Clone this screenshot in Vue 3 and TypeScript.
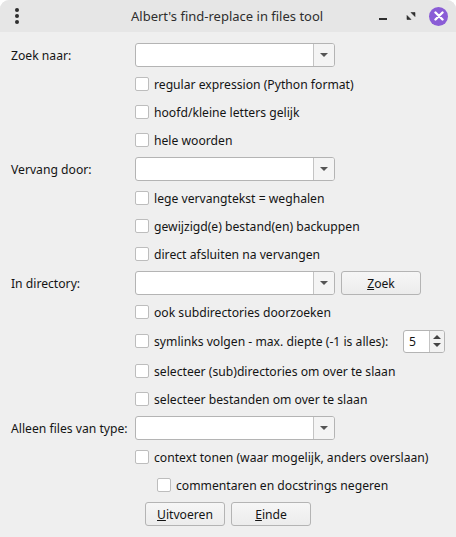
<template>
  <div class="window">
    <header class="titlebar">
      <div class="menu-dots"><span></span><span></span><span></span></div>
      <div class="title">Albert's find-replace in files tool</div>
      <div class="win-btns">
        <svg class="min" width="10" height="10" viewBox="0 0 10 10"><rect x="1" y="7" width="8" height="2" fill="#2e2e2e" /></svg>
        <svg class="max" width="10" height="10" viewBox="0 0 10 10"><path d="M5 1.5h4v4zM1 4.5l4 4H1z" fill="#2e2e2e" stroke="#2e2e2e" stroke-width=".6" /></svg>
        <div class="close">
          <svg width="10" height="10" viewBox="0 0 10 10"><path d="M1.5 1.5l7 7M8.5 1.5l-7 7" stroke="#fff" stroke-width="2.4" stroke-linecap="round" /></svg>
        </div>
      </div>
    </header>

    <main class="form">
      <template v-for="row in rows" :key="row.text">
        <div v-if="row.kind === 'combo'" class="row" :class="row.cls">
          <label class="lbl">{{ row.text }}</label>
          <div class="combo">
            <div class="combo-edit"></div>
            <div class="combo-arrow"><i></i></div>
          </div>
          <button v-if="row.button" class="btn zoek"><u>Z</u>oek</button>
        </div>
        <div v-else class="row" :class="[row.cls, { sub: row.sub }]">
          <span class="check"></span>
          <span class="txt">{{ row.text }}</span>
          <div v-if="row.spin" class="spin">
            <div class="spin-val">5</div>
            <div class="spin-arrows"><i class="up"></i><i class="down"></i></div>
          </div>
        </div>
      </template>
      <div class="row actions gap1">
        <button class="btn"><u>U</u>itvoeren</button>
        <button class="btn"><u>E</u>inde</button>
      </div>
    </main>
  </div>
</template>

<script setup lang="ts">
interface Row {
  kind: 'combo' | 'check'
  text: string
  cls?: string
  button?: boolean
  spin?: boolean
  sub?: boolean
}

const rows: Row[] = [
  { kind: 'combo', text: 'Zoek naar:' },
  { kind: 'check', text: 'regular expression (Python format)', cls: 'gap1' },
  { kind: 'check', text: 'hoofd/kleine letters gelijk' },
  { kind: 'check', text: 'hele woorden' },
  { kind: 'combo', text: 'Vervang door:', cls: 'gap1' },
  { kind: 'check', text: 'lege vervangtekst = weghalen', cls: 'gap1' },
  { kind: 'check', text: 'gewijzigd(e) bestand(en) backuppen' },
  { kind: 'check', text: 'direct afsluiten na vervangen' },
  { kind: 'combo', text: 'In directory:', cls: 'gap1', button: true },
  { kind: 'check', text: 'ook subdirectories doorzoeken', cls: 'gap1' },
  { kind: 'check', text: 'symlinks volgen - max. diepte (-1 is alles):', cls: 'gap1', spin: true },
  { kind: 'check', text: 'selecteer (sub)directories om over te slaan', cls: 'gap2' },
  { kind: 'check', text: 'selecteer bestanden om over te slaan' },
  { kind: 'combo', text: 'Alleen files van type:', cls: 'gap1' },
  { kind: 'check', text: 'context tonen (waar mogelijk, anders overslaan)', cls: 'gap1' },
  { kind: 'check', text: 'commentaren en docstrings negeren', sub: true },
]
</script>

<style>
html, body {
  margin: 0;
  background: #fff;
}
</style>

<style scoped>
.window {
  width: 456px;
  height: 537px;
  background: #efefef;
  border-radius: 9px 9px 0 0;
  overflow: hidden;
  font-family: "Noto Sans", sans-serif;
  font-size: 12.17px;
  color: #141414;
}
.titlebar {
  height: 32px;
  background: #e6e6e6;
  display: flex;
  align-items: center;
  position: relative;
}
.menu-dots {
  width: 34px;
  display: flex;
  flex-direction: column;
  align-items: center;
  gap: 2px;
}
.menu-dots span {
  width: 4px;
  height: 4px;
  border-radius: 50%;
  background: #2e2e2e;
}
.title {
  position: absolute;
  left: 131px;
  font-size: 13px;
  color: #2e2e2e;
}
.win-btns {
  margin-left: auto;
  margin-right: 8px;
  display: flex;
  align-items: center;
}
.max {
  margin-left: 18px;
  margin-right: 13px;
}
.close {
  width: 19px;
  height: 19px;
  border-radius: 50%;
  background: #8a5cd6;
  display: flex;
  align-items: center;
  justify-content: center;
}
.form {
  padding: 9px 11px 0 135px;
}
.row {
  height: 28px;
  display: flex;
  align-items: center;
  position: relative;
}
.gap1 {
  margin-top: 1px;
}
.gap2 {
  margin-top: 2px;
}
.lbl {
  position: absolute;
  left: -124px;
  white-space: nowrap;
}
.combo {
  width: 200px;
  height: 24px;
  box-sizing: border-box;
  border: 1px solid #b4b4b4;
  border-radius: 3px;
  background: #fff;
  display: flex;
}
.combo-edit {
  flex: 1;
}
.combo-arrow {
  width: 20px;
  border-left: 1px solid #c4c4c4;
  background: #f4f4f4;
  border-radius: 0 2px 2px 0;
  display: flex;
  align-items: center;
  justify-content: center;
}
.combo-arrow i {
  width: 0;
  height: 0;
  border-left: 4px solid transparent;
  border-right: 4px solid transparent;
  border-top: 4px solid #555;
}
.check {
  width: 14px;
  height: 14px;
  box-sizing: border-box;
  border: 1px solid #bdbdbd;
  border-radius: 2px;
  background: #fff;
  margin-right: 5px;
  flex: none;
}
.txt {
  white-space: nowrap;
}
.sub {
  padding-left: 22px;
}
.btn {
  font: inherit;
  color: inherit;
  width: 80px;
  height: 24px;
  padding: 0;
  box-sizing: border-box;
  border: 1px solid #b4b4b4;
  border-radius: 3px;
  background: linear-gradient(#f6f6f6, #ececec);
}
.zoek {
  margin-left: 6px;
}
.actions {
  padding-left: 10px;
  gap: 6px;
}
.spin {
  position: absolute;
  left: 268px;
  width: 42px;
  height: 23px;
  box-sizing: border-box;
  border: 1px solid #b4b4b4;
  border-radius: 3px;
  background: #fff;
  display: flex;
}
.spin-val {
  flex: 1;
  padding-left: 5px;
  line-height: 22px;
}
.spin-arrows {
  width: 14px;
  border-left: 1px solid #c4c4c4;
  background: #f2f2f2;
  display: flex;
  flex-direction: column;
  align-items: center;
  justify-content: center;
  gap: 4px;
  border-radius: 0 2px 2px 0;
}
.spin-arrows i {
  width: 0;
  height: 0;
  border-left: 4px solid transparent;
  border-right: 4px solid transparent;
}
.spin-arrows .up {
  border-bottom: 4px solid #444;
}
.spin-arrows .down {
  border-top: 4px solid #444;
}
</style>
